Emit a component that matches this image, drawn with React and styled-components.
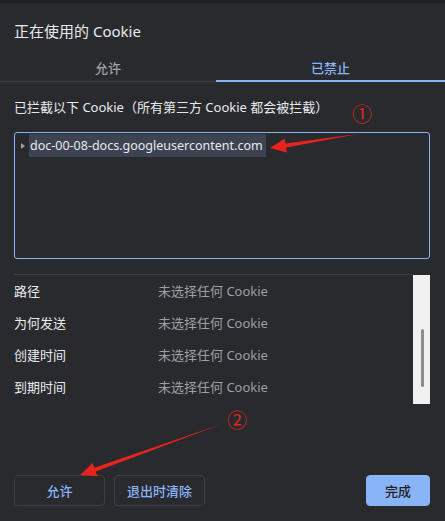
import React from 'react';
import styled, { createGlobalStyle } from 'styled-components';

const GlobalStyle = createGlobalStyle`
    body{
        margin: 0;
        background: #292a2d;
        font-family: "Noto Sans", "Noto Sans CJK SC", sans-serif;
    }
`;

const details = ['路径', '为何发送', '创建时间', '到期时间'];

function App() {
    return (
        <Dialog>
            <GlobalStyle />
            <Title>正在使用的 Cookie</Title>
            <Tabs>
                <Tab>允许</Tab>
                <Tab active>已禁止</Tab>
            </Tabs>
            <Body>
                <Label>已拦截以下 Cookie（所有第三方 Cookie 都会被拦截）</Label>
                <TreeBox>
                    <TreeItem>
                        <Caret />
                        <Host>doc-00-08-docs.googleusercontent.com</Host>
                    </TreeItem>
                </TreeBox>
                <Details>
                    <Rows>
                        {details.map((name) => (
                            <Row key={name}>
                                <Name>{name}</Name>
                                <Value>未选择任何 Cookie</Value>
                            </Row>
                        ))}
                    </Rows>
                    <Scrollbar>
                        <Thumb />
                    </Scrollbar>
                </Details>
            </Body>
            <Footer>
                <Button>允许</Button>
                <Button>退出时清除</Button>
                <Spacer />
                <Button primary>完成</Button>
            </Footer>

            <Marker style={{ left: 352, top: 99 }}>①</Marker>
            <Marker style={{ left: 227, top: 405 }}>②</Marker>
            <Arrows width="445" height="521" viewBox="0 0 445 521">
                <polygon points="358,131 285.5,140.5 284.7,135.6 270,145 286.9,149.4 286.1,144.5" />
                <polygon points="222,421 94.3,464.7 92.6,460 80,472 97.4,473.2 95.7,468.5" />
            </Arrows>
        </Dialog>
    )
};

const Dialog = styled.div`
    position: relative;
    height: 521px;
    display: flex;
    flex-direction: column;
    background: #292a2d;
    border-top: 3px solid #1f2022;
    box-sizing: border-box;
    overflow: hidden;
`;

const Title = styled.div`
    padding: 17px 14px 10px 14px;
    line-height: 22px;
    font-size: 15px;
    color: #e8eaed;
`;

const Tabs = styled.div`
    display: flex;
    height: 29px;
    border-bottom: 1px solid #3c4043;
`;

const Tab = styled.div`
    flex: ${(p) => (p.active ? '1' : '0 0 216px')};
    display: flex;
    align-items: center;
    justify-content: center;
    font-size: 13px;
    font-weight: 500;
    color: ${(p) => (p.active ? '#8ab4f8' : '#9aa0a6')};
    box-shadow: ${(p) => (p.active ? 'inset 0 -2px 0 #8ab4f8' : 'none')};
    margin-bottom: -1px;
`;

const Body = styled.div`
    padding: 0 15px 0 14px;
`;

const Label = styled.div`
    margin-top: 16px;
    line-height: 18px;
    font-size: 13px;
    color: #e8eaed;
`;

const TreeBox = styled.div`
    margin-top: 16px;
    height: 127px;
    box-sizing: border-box;
    border: 1.5px solid #8ab4f8;
    border-radius: 3px;
    padding: 1px 0 0 6px;
`;

const TreeItem = styled.div`
    display: flex;
    align-items: center;
    height: 23px;
`;

const Caret = styled.span`
    width: 0;
    height: 0;
    border-top: 3.5px solid transparent;
    border-bottom: 3.5px solid transparent;
    border-left: 4px solid #9aa0a6;
    margin-right: 4px;
`;

const Host = styled.span`
    background: #3d4350;
    height: 23px;
    line-height: 23px;
    padding: 0 3px 0 1px;
    font-size: 12.5px;
    color: #e8eaed;
`;

const Details = styled.div`
    display: flex;
    margin-top: 15px;
    height: 130px;
`;

const Rows = styled.div`
    flex: 1;
    border-top: 1px solid #3c4043;
`;

const Row = styled.div`
    display: flex;
    align-items: center;
    height: 32px;
    font-size: 13px;
    &:first-child{
        margin-top: -1px;
    }
`;

const Name = styled.div`
    width: 144px;
    color: #e8eaed;
`;

const Value = styled.div`
    color: #9aa0a6;
`;

const Scrollbar = styled.div`
    width: 17px;
    margin-top: 1px;
    background: #f0f0f0;
    position: relative;
`;

const Thumb = styled.div`
    position: absolute;
    left: 8px;
    top: 54px;
    width: 3px;
    height: 58px;
    border-radius: 2px;
    background: #8c8c8c;
`;

const Footer = styled.div`
    margin-top: auto;
    display: flex;
    gap: 9px;
    padding: 0 15px 15px 14px;
`;

const Spacer = styled.div`
    flex: 1;
`;

const Button = styled.div`
    width: ${(p) => (p.primary ? '64px' : '91px')};
    height: 31px;
    box-sizing: border-box;
    display: flex;
    align-items: center;
    justify-content: center;
    border-radius: 4px;
    border: 1px solid ${(p) => (p.primary ? '#8ab4f8' : '#3c4043')};
    background: ${(p) => (p.primary ? '#8ab4f8' : 'transparent')};
    color: ${(p) => (p.primary ? '#202124' : '#8ab4f8')};
    font-size: 13px;
    font-weight: 500;
`;

const Marker = styled.div`
    position: absolute;
    font-size: 20px;
    line-height: 24px;
    color: #e0261e;
    font-family: "Noto Sans CJK SC", sans-serif;
`;

const Arrows = styled.svg`
    position: absolute;
    left: 0;
    top: 0;
    pointer-events: none;
    fill: #e8221c;
`;

export default App;
